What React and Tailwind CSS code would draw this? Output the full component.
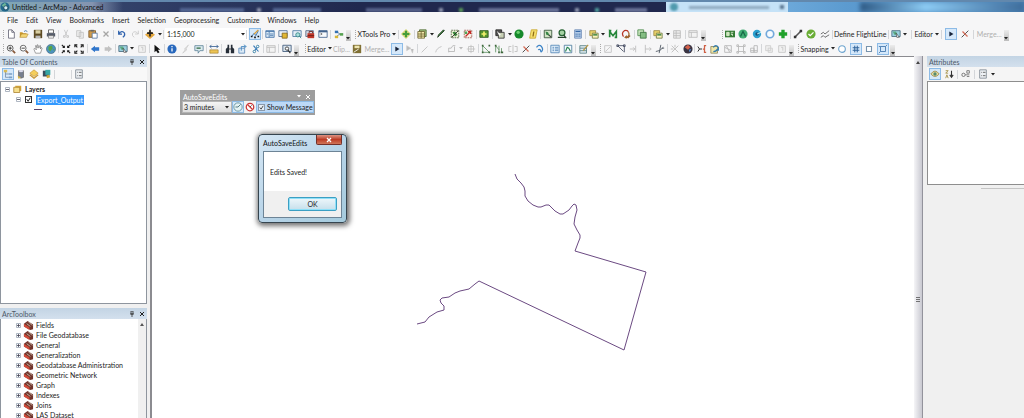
import clsx from "clsx";

const icons = {
  new: <path d="M3 1h4l3 3v7H3z M7 1v3h3" fill="#fff" stroke="#667" />,
  open: (
    <>
      <path d="M1 10V4h3l1 1h4v5z" fill="#c9972b" />
      <path d="M1 10l2-4h8l-2 4z" fill="#f4d675" stroke="#a8832f" strokeWidth=".6" />
      <path d="M6 3q2-2 4 0" fill="none" stroke="#386fa8" />
    </>
  ),
  save: (
    <>
      <path d="M1 1h10v10H1z" fill="#5d4b24" />
      <path d="M3 1.500h6v4H3z" fill="#d9cfa3" />
      <path d="M3 8h6v3H3z" fill="#bbb" />
    </>
  ),
  print: (
    <>
      <path d="M3 1h6v4H3z" fill="#fff" stroke="#555" />
      <path d="M1 5h10v4H1z" fill="#555c6a" />
      <path d="M3 8h6v3H3z" fill="#eee" stroke="#666" strokeWidth=".7" />
    </>
  ),
  cut: <path d="M4 1l3 7M8 1L5 8M3 8h2v2H3zM7 8h2v2H7z" fill="none" stroke="#c4c4c4" />,
  copy: <path d="M2 2h5v7H2zM5 4h5v7H5z" fill="#eee" stroke="#c0c0c0" />,
  paste: (
    <>
      <path d="M1 2h8v8H1z" fill="#cf9a4a" stroke="#7d5a2c" />
      <path d="M3 1h4v2H3z" fill="#666" />
      <path d="M5 5h6v6H5z" fill="#fff" stroke="#56749e" />
    </>
  ),
  delete: <path d="M3 3l6 6M9 3L3 9" stroke="#a5a5a5" strokeWidth="1.500" />,
  undo: <path d="M2 2v4h4M2 6q4-5 7-1q1 3-2 5" fill="none" stroke="#2f62ad" strokeWidth="1.500" />,
  redo: <path d="M10 2v4H6M10 6Q6 1 3 5q-1 3 2 5" fill="none" stroke="#c8c8c8" />,
  add: (
    <>
      <path d="M0 7l6-5 6 5-6 5z" fill="#e3a63c" />
      <path d="M6 1v8M2.500 5h7" stroke="#222" strokeWidth="2" />
    </>
  ),
  editorBar: (
    <>
      <path d="M2 9l3-4 2 3 3-6" fill="none" stroke="#3167a0" />
      <path d="M1 8h2v2H1zM9 8h2v2H9zM5 9h2v2H5z" fill="#111" />
      <path d="M10 1L5 6" stroke="#d99e35" strokeWidth="1.500" />
    </>
  ),
  toc: (
    <>
      <path d="M1 2h10v8H1z" fill="#dcebf7" stroke="#4373a8" />
      <path d="M1 3h10M5 3v7M6 6h4M2 6h2M6 8h4" stroke="#4373a8" />
    </>
  ),
  catalog: (
    <>
      <path d="M1 2h10v7H1z" fill="#e9f1f8" stroke="#4d6c94" />
      <path d="M5 5h6v6H5z" fill="#e1b733" stroke="#85681d" />
    </>
  ),
  search: (
    <>
      <path d="M1 2h10v7H1z" fill="#e4eef7" stroke="#4d79a4" />
      <circle cx="7" cy="7" r="2.500" fill="#a9dfdc" stroke="#338385" />
      <path d="M9 9l2 2" stroke="#338385" />
    </>
  ),
  toolboxWin: (
    <>
      <path d="M1 2h9v7H1z" fill="#d3dbe7" stroke="#54657f" />
      <path d="M3 5h8v6H3z" fill="#c2392b" />
      <path d="M5 5V3h4v2M3 8h8" fill="none" stroke="#681c17" />
    </>
  ),
  python: (
    <>
      <path d="M1 2h10v8H1z" fill="#f7fafd" stroke="#41628d" />
      <path d="M1 3h10" stroke="#41628d" strokeWidth="2" />
      <path d="M3 5l2 1-2 1" fill="none" stroke="#333" strokeWidth=".8" />
    </>
  ),
  model: (
    <>
      <path d="M3 3l4 3-4 3M7 6h4" fill="none" stroke="#5b7895" />
      <path d="M1 2h4v3H1z" fill="#3471b2" />
      <path d="M1 8h4v3H1z" fill="#d7b735" />
      <path d="M7 5h4v3H7z" fill="#55a24e" />
    </>
  ),
  plus: (
    <>
      <path d="M6 0l6 6-6 6-6-6z" fill="#d3d678" />
      <path d="M6 2v8M2 6h8" stroke="#449d3b" strokeWidth="2.500" />
    </>
  ),
  tableX: (
    <>
      <path d="M3 1h8v8H3z" fill="#a2bf7b" stroke="#4c6b31" />
      <path d="M1 3h8v8H1zM1 6h8M1 8.500h8M5 3v8" fill="#f3e8a9" stroke="#625a28" strokeWidth=".9" />
    </>
  ),
  pencilG: <path d="M2 10l1-3 6-6 1 1-6 6z" fill="#3f8b42" stroke="#20331f" />,
  clipG: (
    <>
      <path d="M1.500 1.500h9v9h-9z" fill="#eef2d8" stroke="#4a5b37" strokeDasharray="2 1" />
      <path d="M3 4l3-1 3 4-3 2z" fill="#38883a" />
      <path d="M2 10l8-8" stroke="#222" />
    </>
  ),
  clipR: (
    <>
      <path d="M1.500 1.500h9v9h-9z" fill="#f7efe6" stroke="#9b5148" strokeDasharray="2 1" />
      <path d="M3 9l6-6M6 3h3v3" fill="none" stroke="#c72a27" strokeWidth="1.500" />
      <path d="M2 3h3v3H2z" fill="#54a457" />
    </>
  ),
  plusBox: (
    <>
      <path d="M1 2h10v8H1z" fill="#56942f" stroke="#2c541c" />
      <path d="M6 3v6M3 6h6" stroke="#f2f06e" strokeWidth="2" />
    </>
  ),
  selectX: (
    <>
      <path d="M1 1h7v7H1z" fill="#555" stroke="#222" />
      <path d="M4 4h7v7H4z" fill="#c8d0b5" stroke="#333" />
      <path d="M2 2l5 5-2 1z" fill="#fff" />
    </>
  ),
  ballG: (
    <>
      <circle cx="6" cy="6" r="5.500" fill="#168a2c" />
      <circle cx="5" cy="4" r="2" fill="#6bd06f" />
    </>
  ),
  noteY: (
    <>
      <path d="M4 1h7l-2 10H2z" fill="#f6df6b" stroke="#c6a52d" />
      <path d="M7 3L6 9" stroke="#8b6914" strokeWidth="1.500" />
    </>
  ),
  mapG: (
    <>
      <path d="M1.500 1.500h9v9h-9z" fill="#d2e4c6" stroke="#334f35" />
      <path d="M3 3l3 1 2 4-4-1z" fill="#378445" />
      <path d="M7 7l3 3" stroke="#444" strokeWidth="1.500" />
    </>
  ),
  zoomG: (
    <>
      <circle cx="6" cy="4.500" r="3.500" fill="#a5d1a3" stroke="#276332" strokeWidth="1.500" />
      <path d="M1 10h10M8 7l3 4" stroke="#27462a" strokeWidth="1.500" />
    </>
  ),
  calc: (
    <>
      <path d="M2 1h8v10H2z" fill="#c2d6ef" stroke="#6484b1" />
      <path d="M3 3h6" stroke="#3769a7" strokeWidth="1.500" />
      <path d="M3 6h6M3 8.500h6" stroke="#4675ad" strokeDasharray="1.500 .7" strokeWidth="1.500" />
    </>
  ),
  layersY: (
    <>
      <path d="M1 2h7v6H1z" fill="#ead36b" stroke="#9c8740" />
      <path d="M4 5h7v6H4z" fill="#fcf3bb" stroke="#6e7940" />
      <path d="M5 7h5" stroke="#52914d" strokeWidth="2" />
    </>
  ),
  letterM: <path d="M2 10V3l4 5 4-5v7M1 2h3M8 10h3" fill="none" stroke="#25863a" strokeWidth="2" />,
  rotate: (
    <>
      <path d="M3 9Q0 5 4 2q4-1 5 2" fill="none" stroke="#b73426" strokeWidth="1.500" />
      <path d="M9 4q2 4-2 6H5M7 8l-2 2 2 1M8 11l3-3" fill="none" stroke="#9e612c" strokeWidth="1.500" />
    </>
  ),
  layersG: (
    <>
      <path d="M1 1h7v7H1z" fill="#c9e6bf" stroke="#4e8b4e" />
      <path d="M4 4h7v7H4z" fill="#84be83" stroke="#3a713d" />
    </>
  ),
  grayTable: <path d="M2 2h8v9H2zM2 5h8M2 8h8M5 2v9" fill="#eee" stroke="#b9b9b9" />,
  greenTag: (
    <>
      <path d="M0 2h12v8H0z" fill="#357b35" />
      <path d="M2 4h3v4H2zM7 4h3M7 6h2v2" fill="#cce9b6" stroke="#dcebd1" />
    </>
  ),
  circleA: (
    <>
      <circle cx="6" cy="6" r="5.500" fill="#42ae74" />
      <path d="M3 9l3-6 3 6" fill="none" stroke="#176846" strokeWidth="1.500" />
    </>
  ),
  circleB: (
    <>
      <circle cx="6" cy="6" r="5" fill="#2ca0ce" />
      <circle cx="6" cy="6" r="2" fill="#124e77" />
      <path d="M6 6l5-2" stroke="#dff" />
    </>
  ),
  ring: <circle cx="6" cy="6" r="4.500" fill="#f8fcff" stroke="#72a9dc" strokeWidth="2" />,
  bigPlus: <path d="M6 1v10M1 6h10" stroke="#20a12b" strokeWidth="4" />,
  node: (
    <>
      <path d="M3 9l6-6" stroke="#555" strokeWidth="2" />
      <path d="M1 8h3v3H1zM8 1h3v3H8z" fill="#333" />
    </>
  ),
  check: (
    <>
      <circle cx="6" cy="6" r="5.500" fill="#69ad35" />
      <path d="M3 6l2 2 4-4" fill="none" stroke="#fff" strokeWidth="1.500" />
    </>
  ),
  lines: <path d="M1 6l3-2 2 2 5-4M1 10l3-2 2 2 5-3" fill="none" stroke="#555" />,
  mapSel: (
    <>
      <path d="M1 2h10v7H1z" fill="#9bd0df" stroke="#486b80" />
      <path d="M2 3h4l2 4H4z" fill="#5caa83" />
      <path d="M6 5l4 5H7z" fill="#fff" stroke="#333" strokeWidth=".7" />
    </>
  ),
  play: <path d="M4 3l5 3-5 3z" fill="#18243b" />,
  cutRed: (
    <>
      <path d="M2 10l8-8" stroke="#333" />
      <path d="M3 3l6 6" stroke="#d56d58" strokeWidth="1.500" />
    </>
  ),
  zoomIn: (
    <>
      <circle cx="5" cy="5" r="3.500" fill="#fff" stroke="#444" />
      <path d="M3 5h4M5 3v4" stroke="#222" />
      <path d="M8 8l3 3" stroke="#865839" strokeWidth="2" />
    </>
  ),
  zoomOut: (
    <>
      <circle cx="5" cy="5" r="3.500" fill="#fff" stroke="#555" />
      <path d="M3 5h4" stroke="#222" />
      <path d="M8 8l3 3" stroke="#865839" strokeWidth="2" />
    </>
  ),
  hand: <path d="M3 11L1 6l1-1 2 2-1-5h1l1 3V1h1l1 4 1-3h1v4l1-2 1 1-2 6z" fill="#fff" stroke="#666" strokeWidth=".7" />,
  globe: (
    <>
      <circle cx="6" cy="6" r="5.500" fill="#4a94be" stroke="#47647a" strokeWidth=".7" />
      <path d="M3 3l4-1 1 3-3 4-2-2zM8 7l2-1v2z" fill="#59a545" />
    </>
  ),
  zoomFixIn: <path d="M1 1l3 3M4 2v2H2M11 1L8 4M8 2v2h2M1 11l3-3M2 8h2v2M11 11L8 8M10 8H8v2" fill="none" stroke="#1c1c1c" strokeWidth="1.300" />,
  zoomFixOut: <path d="M4 4L2 2M4 1H1v3M8 4l2-2M8 1h3v3M4 8l-2 2M1 8v3h3M8 8l2 2M11 8v3H8" fill="none" stroke="#1c1c1c" strokeWidth="1.300" />,
  back: <path d="M1 6l5-4v2h5v4H6v2z" fill="#3076cb" />,
  forward: <path d="M11 6L6 2v2H2v4h4v2z" fill="#c2c2c2" />,
  grayBox: <path d="M2 2h8v8H2zM5 4h2v4" fill="#f1f1f1" stroke="#c4c4c4" />,
  pointer: <path d="M3 1v9l2-2 2 3 2-1-2-3h3z" fill="#111" />,
  info: (
    <>
      <circle cx="6" cy="6" r="5.500" fill="#2868bd" />
      <path d="M6 5v4M6 2.500v1.500" stroke="#fff" strokeWidth="1.500" />
    </>
  ),
  bolt: <path d="M9 1L4 6l1 1-3 4 5-4-1-1z" fill="#ddd" stroke="#c2c2c2" strokeWidth=".6" />,
  popup: (
    <>
      <path d="M1 2h10v6H7l-2 3V8H1z" fill="#dcebf0" stroke="#62859b" />
      <path d="M3 5h5" stroke="#57876a" strokeWidth="2" />
    </>
  ),
  measure: (
    <>
      <path d="M1 7h10v4H1z" fill="#edc454" stroke="#987329" strokeWidth=".7" />
      <path d="M1 3h10M3 1L1 3l2 2M9 1l2 2-2 2" fill="none" stroke="#365f91" />
    </>
  ),
  binoculars: (
    <>
      <path d="M3 1h2v4H3zM7 1h2v4H7zM1 6l2-2h2v7H1zM7 4h2l2 2v5H7z" fill="#262e38" />
      <path d="M5 5h2v2H5z" fill="#555" />
    </>
  ),
  route: (
    <>
      <path d="M1 5h7v6H1z" fill="#dceaf6" stroke="#5a88b7" />
      <path d="M4 8V3h5M7 1l3 2-3 2" fill="none" stroke="#3d83bd" />
    </>
  ),
  xy: (
    <>
      <path d="M3 2l6 7M9 2L3 10" stroke="#3177b7" strokeWidth="1.300" />
      <circle cx="8" cy="3" r="1.500" fill="#fff" stroke="#2c789f" />
      <circle cx="4" cy="9" r="1.500" fill="#fff" stroke="#2c789f" />
    </>
  ),
  grayWin: <path d="M1 2h10v8H1zM1 4h10M4 4v6" fill="#f3f3f3" stroke="#bcbcbc" />,
  viewer: (
    <>
      <path d="M1 1.500h10V9H1z" fill="#dae5ef" stroke="#3e5979" />
      <circle cx="6" cy="5.500" r="2" fill="#fff" stroke="#333" />
      <path d="M7 7l3 4" stroke="#333" strokeWidth="1.300" />
    </>
  ),
  mergeDisk: (
    <>
      <path d="M1 1h10v10H1z" fill="#807034" />
      <path d="M3 2h6v3H3z" fill="#efe6b1" />
      <path d="M2 10l6-4" stroke="#fff" />
    </>
  ),
  pointerA: <path d="M2 2v6l5-3zM7 6l2 5 1-5" fill="#bbb" stroke="#c7c7c7" strokeWidth=".7" />,
  line: <path d="M2 10l7-7" stroke="#bdbdbd" />,
  arc: <path d="M2 10q1-5 7-7" fill="none" stroke="#bdbdbd" />,
  polyG: <path d="M2 10V5h3l2-3h3M2 9h7V3" fill="none" stroke="#b5b5b5" />,
  gridG: <path d="M6 1v10M1 6h10M3 3h6v6H3z" fill="none" stroke="#c0c0c0" />,
  vertices: (
    <>
      <path d="M2 2v8h8L2 2" fill="none" stroke="#5f9361" />
      <path d="M1 1h2v2H1zM1 9h2v2H1zM9 9h2v2H9zM9 1h2v2H9z" fill="#3c663b" />
    </>
  ),
  reshape: (
    <>
      <path d="M2 2v8M6 2v8M2 2l4 5M9 5v5" fill="none" stroke="#5f9361" />
      <path d="M1 1h2v2H1zM5 9h2v2H5zM8 9h3v2H8z" fill="#3c663b" />
    </>
  ),
  splitG: <path d="M6 1v10M4 3H1v6h3M8 3h3v6H8" fill="none" stroke="#bdbdbd" />,
  rotateB: <path d="M3 4q3-4 6-1 3 4-1 7M5 7q3-2 3 2" fill="none" stroke="#3d83c6" strokeWidth="1.500" />,
  attrs: (
    <>
      <path d="M1 1.500h10v9H1z" fill="#e2effa" stroke="#4f83b6" />
      <path d="M3 4h2M6 4h4M3 6h2M6 6h4M3 8h2M6 8h4" stroke="#4f83b6" />
    </>
  ),
  sketch: (
    <>
      <path d="M1.500 1.500h9v9h-9z" fill="#f5fbff" stroke="#4c7b9b" />
      <path d="M3 9l2-5 2 1 2 4" fill="none" stroke="#26824c" strokeWidth="1.300" />
    </>
  ),
  createF: (
    <>
      <path d="M1 2h8v9H1zM1 5h8M1 8h8" fill="#dfebf1" stroke="#577f84" />
      <path d="M5 8l6-7" stroke="#b59645" strokeWidth="1.500" />
    </>
  ),
  boxLine: <path d="M2 2h8v8H2zM3 9l6-6" fill="none" stroke="#c2c2c2" />,
  topo: <path d="M2 2h8v8M2 2l7 7M1 1h2v2H1zM9 1h2v2H9z" fill="none" stroke="#434a60" />,
  trim: <path d="M1 6h6M8 2v8M5 4l2 2-2 2" fill="none" stroke="#bcbcbc" />,
  extend: <path d="M4 1v10M4 6h7M9 4l2 2-2 2" fill="none" stroke="#bcbcbc" />,
  cross: <path d="M1 9q5 0 9-5M7 1L5 11M8 5h3" fill="none" stroke="#48525d" />,
  scissors: <path d="M2 2l8 8M10 2l-8 8M6 1v3M1 6h3" stroke="#b8b8b8" />,
  ballR: (
    <>
      <circle cx="6" cy="6" r="5.500" fill="#3a3442" />
      <path d="M2 4l4-3 3 3-3 3z" fill="#d3604a" />
      <path d="M7 7l3-1-2 4z" fill="#5c8ed1" />
    </>
  ),
  redJoin: (
    <>
      <path d="M11 2H9v8h2M9 6H7" fill="none" stroke="#cf6045" strokeWidth="1.500" />
      <path d="M1 3l2 3-2 3M3 6h3" fill="none" stroke="#333" strokeWidth="1.200" />
    </>
  ),
  refresh: (
    <>
      <path d="M1 3h8v8H1z" fill="#efe7a9" stroke="#91885a" />
      <path d="M4 4q3-4 6 0v4M4 9q4 0 5-3" fill="none" stroke="#317cae" strokeWidth="1.500" />
    </>
  ),
  grayA: <path d="M2 2h8v8H2zM2 4l8 4M4 2l4 8" fill="none" stroke="#b5b5b5" />,
  grayB: <path d="M3 3h6v6H3zM1 1h2v2H1zM9 1h2v2H9zM1 9h2v2H1zM9 9h2v2H9z" fill="none" stroke="#b5b5b5" />,
  grayC: <path d="M2 5h4v5H2zM6 2h4v8H6zM2 8h8" fill="none" stroke="#b5b5b5" />,
  grayD: <path d="M2 2h6v6H2zM5 5h5v5H5z" fill="#eee" stroke="#ccc" />,
  snapPoint: <circle cx="6" cy="6" r="4" fill="#fff" stroke="#6da4cf" strokeWidth="1.300" />,
  snapEnd: <path d="M2 4.500h8M2 7.500h8M4.500 2v8M7.500 2v8" fill="none" stroke="#2f639b" strokeWidth="1.200" />,
  snapVertex: <path d="M3 3h6v6H3z" fill="#fff" stroke="#7793ad" strokeWidth="1.300" />,
  snapEdge: <path d="M3 3h6v6H3zM1 11l2-2M9 3l2-2M1 3h2" fill="none" stroke="#3f73ab" />,
  byOrder: (
    <>
      <path d="M3 2v8h4M3 6h4" fill="none" stroke="#7a8fa5" />
      <path d="M1 1h4v3H1z" fill="#d8bb55" />
      <path d="M7 5h4v2H7zM7 9h4v2H7z" fill="#7c9ec4" />
    </>
  ),
  bySource: (
    <>
      <path d="M3 2h6v8l-3 1-3-1z" fill="#777f8f" stroke="#555" strokeWidth=".7" />
      <ellipse cx="6" cy="2.500" rx="3" ry="1.300" fill="#dde" />
      <path d="M2 8l4 2-3 2z" fill="#d8b94b" />
    </>
  ),
  byVisible: (
    <>
      <path d="M1 5l5-4 5 4-5 4z" fill="#f4ce5c" stroke="#bd8e2c" strokeWidth=".7" />
      <path d="M1 7l5 4 5-4" fill="none" stroke="#c59431" strokeWidth="1.500" />
    </>
  ),
  bySelect: (
    <>
      <path d="M1 2h8v7H1z" fill="#394c5c" />
      <path d="M4 1h6v6H4z" fill="#35a6a3" />
      <path d="M5 8l3-1 2 3-4 1z" fill="#cda63b" />
    </>
  ),
  options: (
    <>
      <path d="M2 1h8v10H2z" fill="#eef1f4" stroke="#7e8893" />
      <path d="M4 4h1M6 4h3M4 8h1M6 8h3" stroke="#555" />
    </>
  ),
  eye: (
    <>
      <path d="M1 6q5-7 10 0-5 6-10 0z" fill="#e5d9a2" stroke="#a18d4a" />
      <circle cx="6" cy="6" r="2" fill="#558b6f" />
    </>
  ),
  sort: (
    <>
      <path d="M2 2h3L2 5h3M2 11l1.500-4L5 11" fill="none" stroke="#a08a3c" />
      <path d="M9 2v7M7 7l2 3 2-3" fill="none" stroke="#333" strokeWidth="1.300" />
    </>
  ),
  related: (
    <>
      <circle cx="3" cy="7" r="2" fill="none" stroke="#666" />
      <path d="M5 7h5M7 2h3v3H7zM7 9h3" fill="none" stroke="#6d6d6d" />
    </>
  ),
  clock: (
    <>
      <circle cx="6" cy="6" r="5" fill="#e3f2f4" stroke="#5c8b96" />
      <path d="M6 6l3-3M6 6H3" stroke="#37646f" />
    </>
  ),
  stop: (
    <>
      <circle cx="6" cy="6" r="4.500" fill="#fff" stroke="#cc3737" strokeWidth="1.500" />
      <path d="M3 3l6 6" stroke="#cc3737" strokeWidth="1.500" />
      <path d="M6 6l2-2" stroke="#444" />
    </>
  ),
  layers: (
    <>
      <path d="M3 1h8v7H3z" fill="#d9a93a" />
      <path d="M1 3h8v7H1z" fill="#f6df8d" stroke="#a77c27" />
    </>
  ),
  toolbox: (
    <>
      <path d="M1 4l4-3 6 4v5l-3 1-7-4z" fill="#71332b" />
      <path d="M1 4l6 4v3L1 7z" fill="#d04d3c" />
      <path d="M4 4l4 3M6 2l4 4" stroke="#c9b9a6" />
    </>
  ),
};

const Icon = ({ name, className = "size-3" }) => (
  <svg viewBox="0 0 12 12" aria-hidden="true" className={clsx("block shrink-0", className)}>
    {icons[name]}
  </svg>
);

const Tools = ({ names, active }) =>
  names.split(" ").map((name) => (
    <button
      key={name}
      type="button"
      aria-label={name}
      className={clsx(
        "flex h-3 w-3 shrink-0 items-center justify-center",
        active && "border border-[#8dbbe6] bg-[#d5e8fa]"
      )}
    >
      <Icon name={name} className="size-[10px]" />
    </button>
  ));

const Sep = () => <span className="h-[9px] w-px shrink-0 bg-[#d4d6d9]" />;

const Grip = () => <span className="h-[9px] w-0 shrink-0 border-l border-dotted border-[#aaa]" />;

const Caret = ({ faded }) => (
  <svg viewBox="0 0 4 3" aria-hidden="true" className="h-[3px] w-1 shrink-0">
    <path d="M0 0h4L2 2.500z" fill={faded ? "#bbb" : "#222"} />
  </svg>
);

const Overflow = () => (
  <button type="button" aria-label="Toolbar options" className="flex h-[11px] w-[5px] shrink-0 items-end justify-center self-end bg-linear-to-b from-[#ececec] to-[#bdbdbd] pb-px">
    <Caret />
  </button>
);

const Label = ({ children, caret, off }) => (
  <button type="button" className={clsx("flex shrink-0 items-center gap-[2px] whitespace-nowrap", off && "text-[#b0b0b0]")}>
    {children}
    {caret && <Caret />}
  </button>
);

const Bar = ({ className, children }) => (
  <div role="toolbar" className={clsx("flex h-full shrink-0 items-center justify-between", className)}>
    {children}
  </div>
);

const PanelTitle = ({ children, controls }) => (
  <div className="flex h-[11px] shrink-0 items-center justify-between bg-linear-to-b from-[#c3d4e4] to-[#d3e0ed] px-[2px] text-[#4c5968]">
    <h2>{children}</h2>
    {controls && (
      <div className="flex items-center gap-1">
        <button type="button" aria-label="Auto hide">
          <svg viewBox="0 0 6 6" className="size-[6px]">
            <path d="M2 0v3h2V0zM1 3h4M3 3v3" fill="none" stroke="#333" strokeWidth=".8" />
          </svg>
        </button>
        <button type="button" aria-label="Close">
          <svg viewBox="0 0 6 6" className="size-[6px]">
            <path d="M1 1l4 4M5 1L1 5" stroke="#222" />
          </svg>
        </button>
      </div>
    )}
  </div>
);

const Expander = ({ open }) => (
  <button type="button" aria-label={open ? "Collapse" : "Expand"} className="shrink-0">
    <svg viewBox="0 0 5 5" className="size-[5px]">
      <path d="M.5.5h4v4h-4z" fill="#fff" stroke="#9aa5b3" strokeWidth=".8" />
      <path d={open ? "M1 2.500h3" : "M1 2.500h3M2.500 1v3"} stroke="#445" strokeWidth=".8" />
    </svg>
  </button>
);

const menus = ["File", "Edit", "View", "Bookmarks", "Insert", "Selection", "Geoprocessing", "Customize", "Windows", "Help"];

const toolboxes = [
  "Fields",
  "File Geodatabase",
  "General",
  "Generalization",
  "Geodatabase Administration",
  "Geometric Network",
  "Graph",
  "Indexes",
  "Joins",
  "LAS Dataset",
];

const TitleBar = () => (
  <header className="relative flex h-3 shrink-0 items-center overflow-hidden border-t-2 border-[#6288ad] bg-[#20284e]">
    <div className="absolute inset-y-0 left-[35%] right-[36%] flex items-end justify-around blur-[1px]">
      <span className="h-1 w-14 bg-[#56618a]" />
      <span className="size-1 bg-[#9098b0]" />
      <span className="size-1 bg-[#5a9a58]" />
      <span className="h-1 w-20 bg-[#6a7398]" />
      <span className="size-1 bg-[#9098b0]" />
      <span className="size-1 bg-[#4e9c9c]" />
      <span className="h-1 w-8 bg-[#6a7398]" />
    </div>
    <div className="absolute inset-y-0 left-[10%] w-[25%] bg-linear-to-r from-[#34446c] to-[#20284e]" />
    <div className="absolute inset-y-0 left-[17%] right-[68%] flex items-end justify-around blur-[1px]">
      <span className="h-1 w-16 bg-[#536591]" />
      <span className="size-1 bg-[#9098b0]" />
      <span className="h-1 w-12 bg-[#536591]" />
    </div>
    <div className="absolute inset-y-0 right-0 left-[65%] bg-linear-to-r from-[#8dc4ee] via-[#5c9bd0] to-[#4c83b5]" />
    <div className="absolute inset-y-0 right-0 left-[84%] bg-linear-to-r from-[#2f5a85] via-[#8ccaf2] via-40% to-[#3e6c9b] blur-[2px]" />
    <div className="absolute inset-y-0 left-[65%] flex w-[12%] items-center justify-between bg-[#c5e2f7] px-1">
      <span className="size-2 rounded-full bg-[#4f99ad] blur-[1px]" />
      <span className="h-[3px] w-20 bg-[#8fa9bf] blur-[1px]" />
      <span className="size-1 bg-[#597590] blur-[1px]" />
    </div>
    <div className="absolute inset-y-0 left-0 w-[12%] bg-linear-to-r from-[#7fa8b6] via-[#8494b0] via-75% to-transparent" />
    <svg viewBox="0 0 12 12" className="relative size-[10px]">
      <circle cx="6" cy="6" r="5.500" fill="#23698e" />
      <path d="M2 4l4-3 2 3-3 3z" fill="#6db598" />
      <circle cx="7" cy="7" r="2.500" fill="#d7eef5" stroke="#174358" />
    </svg>
    <h1 className="relative ml-[2px] whitespace-nowrap text-[#111]">Untitled - ArcMap - Advanced</h1>
  </header>
);

const Toolbars = () => (
  <div className="shrink-0 overflow-hidden">
    <div className="flex h-[14px] items-center">
      <Bar className="w-[351px] pl-[3px]">
        <Grip />
        <Tools names="new open save print" />
        <Sep />
        <Tools names="cut copy paste delete" />
        <Sep />
        <Tools names="undo redo" />
        <Sep />
        <Tools names="add" />
        <Caret />
        <Sep />
        <select aria-label="Map scale" className="h-3 w-[83px] shrink-0 appearance-none bg-white px-[2px]">
          <option>1:15,000</option>
        </select>
        <span className="-ml-2">
          <Caret />
        </span>
        <Sep />
        <Tools names="editorBar" active />
        <Sep />
        <Tools names="toc catalog search toolboxWin python" />
        <Sep />
        <Tools names="model" />
        <Overflow />
      </Bar>
      <Bar className="w-[355px] pl-1">
        <Grip />
        <Label caret>XTools Pro</Label>
        <Sep />
        <Tools names="plus" />
        <Sep />
        <Tools names="tableX" />
        <Caret />
        <Tools names="pencilG clipG clipR" />
        <Sep />
        <Tools names="plusBox" />
        <Sep />
        <Tools names="selectX" />
        <Caret />
        <Tools names="ballG noteY" />
        <Sep />
        <Tools names="mapG zoomG" />
        <Sep />
        <Tools names="calc" />
        <Sep />
        <Tools names="layersY" />
        <Caret />
        <Tools names="letterM rotate" />
        <Sep />
        <Tools names="layersG" />
        <Sep />
        <Tools names="layersY" />
        <Caret />
        <Tools names="grayTable" />
        <Sep />
        <Tools names="grayWin" />
        <Overflow />
      </Bar>
      <Bar className="ml-4 w-[185px]">
        <Grip />
        <Tools names="greenTag circleA circleB ring bigPlus" />
        <Sep />
        <Tools names="node check lines" />
        <Sep />
        <Label>Define FlightLine</Label>
        <Sep />
        <Tools names="mapSel" />
        <Caret />
      </Bar>
      <Bar className="ml-1 w-[98px]">
        <Sep />
        <Label caret>Editor</Label>
        <Sep />
        <Tools names="play" active />
        <Tools names="cutRed" />
        <Sep />
        <Label off>Merge...</Label>
        <Overflow />
      </Bar>
    </div>
    <div className="flex h-[15px] items-center">
      <Bar className="w-[299px] pl-[3px]">
        <Grip />
        <Tools names="zoomIn zoomOut hand globe" />
        <Sep />
        <Tools names="zoomFixIn zoomFixOut" />
        <Sep />
        <Tools names="back forward" />
        <Sep />
        <Tools names="mapSel" />
        <Caret />
        <Tools names="grayBox" />
        <Sep />
        <Tools names="pointer" />
        <Sep />
        <Tools names="info bolt popup" />
        <Sep />
        <Tools names="measure" />
        <Sep />
        <Tools names="binoculars route xy" />
        <Sep />
        <Tools names="grayWin" />
        <Sep />
        <Tools names="viewer" />
        <Overflow />
      </Bar>
      <Bar className="ml-1 w-[293px] pl-[2px]">
        <Grip />
        <Label caret>Editor</Label>
        <Label off>Clip...</Label>
        <Tools names="mergeDisk" />
        <Label off>Merge...</Label>
        <Tools names="play" active />
        <Tools names="pointerA" />
        <Sep />
        <Tools names="line arc polyG" />
        <Caret faded />
        <Tools names="gridG" />
        <Sep />
        <Tools names="vertices reshape splitG cutRed rotateB" />
        <Sep />
        <Tools names="attrs sketch" />
        <Sep />
        <Tools names="createF" />
        <Overflow />
      </Bar>
      <Bar className="w-[198px] pl-1">
        <Grip />
        <Tools names="boxLine topo trim extend cross" />
        <Sep />
        <Tools names="scissors ballR" />
        <Sep />
        <Tools names="redJoin refresh grayA grayB grayC" />
        <Sep />
        <Tools names="grayD grayBox" />
        <Overflow />
      </Bar>
      <Bar className="w-[101px] pl-1">
        <Grip />
        <Label caret>Snapping</Label>
        <Tools names="snapPoint" />
        <Tools names="snapEnd" active />
        <Tools names="snapVertex" />
        <Tools names="snapEdge" active />
        <Overflow />
      </Bar>
    </div>
  </div>
);

const AutoSaveToolbar = () => (
  <section className="absolute top-[33px] left-[28px] w-[135px] border-2 border-[#9d9d9d] bg-[#f2f2f2]">
    <div className="flex h-[9px] items-center justify-between bg-[#9d9d9d] px-px text-white">
      <h2>AutoSaveEdits</h2>
      <div className="flex items-center gap-1 pr-px">
        <svg viewBox="0 0 4 3" className="h-[3px] w-1">
          <path d="M0 0h4L2 2.500z" fill="#fff" />
        </svg>
        <button type="button" aria-label="Close toolbar">
          <svg viewBox="0 0 6 6" className="size-[6px]">
            <path d="M1 1l4 4M5 1L1 5" stroke="#fff" />
          </svg>
        </button>
      </div>
    </div>
    <div className="flex h-3 items-center">
      <div className="relative flex h-full items-center">
        <select aria-label="Save interval" className="h-full w-[50px] appearance-none border border-[#b5b5b5] bg-linear-to-b from-[#f4f4f4] to-[#dedede] pl-px">
          <option>3 minutes</option>
        </select>
        <span className="pointer-events-none absolute right-[3px]">
          <Caret />
        </span>
      </div>
      <Tools names="clock" active />
      <Tools names="stop" />
      <label className="flex h-full grow items-center gap-[2px] border border-[#8dbbe6] bg-[#bcd9f7] pl-px whitespace-nowrap">
        <input type="checkbox" defaultChecked className="peer sr-only" />
        <svg viewBox="0 0 6 6" className="size-[7px] shrink-0 border border-[#8b9aab] bg-[#e6eef6]">
          <path d="M1 3l1.500 2L5 1" fill="none" stroke="#333" />
        </svg>
        Show Message
      </label>
    </div>
  </section>
);

const SavedDialog = () => (
  <section
    role="dialog"
    aria-labelledby="saved-title"
    className="absolute top-[77px] left-[106px] flex w-[89px] flex-col rounded-[4px] border border-[#36454f] bg-linear-to-br from-[#d5e7f5] via-[#b8d4e8] to-[#a5cbdd] px-1 pb-1 shadow-[1px_1px_5px_2px_rgba(0,0,0,0.55)]"
  >
    <div className="flex h-4 items-center justify-between">
      <h2 id="saved-title" className="text-[#111]">AutoSaveEdits</h2>
      <button type="button" aria-label="Close dialog" className="flex h-[10px] w-[26px] items-center justify-center self-start rounded-b-[2px] border border-t-0 border-[#743029] bg-linear-to-b from-[#dc9383] via-[#bc3b25] to-[#d07559]">
        <svg viewBox="0 0 6 6" className="size-[6px]">
          <path d="M1 1l4 4M5 1L1 5" stroke="#fff" strokeWidth="1.300" />
        </svg>
      </button>
    </div>
    <div className="border border-[#6d8496] bg-[#f0f0f0]">
      <p className="flex h-[39px] items-center bg-white px-[6px]">Edits Saved!</p>
      <div className="flex h-[26px] items-center justify-end px-1">
        <button type="button" className="h-[14px] w-[49px] rounded-[2px] border border-[#3c9fc3] bg-linear-to-b from-[#eef7fb] to-[#c6dfeb] ring-1 ring-[#8fe0f8] ring-inset">
          OK
        </button>
      </div>
    </div>
  </section>
);

const parcel =
  "363,117 365,122 369,126 372,130 373,134 373,139 376,144 381,148 386,150 389,150 394,148 397,148 403,154 408,157 411,157 417,153 420,149 422,147 424,148 425,153 423,160 422,167 425,173 428,178 428,181 426,186 423,194 494,215 472,293 327,224 323,227 317,232 308,234 303,236 297,240 290,241 288,243 289,246 292,249 292,253 285,255 277,260 273,265 265,267";

const App = () => (
  <div className="flex h-screen min-w-0 flex-col overflow-hidden bg-[#f0f0f0] font-[Lato,'Open_Sans',sans-serif] text-[7px] leading-[10px] text-[#1c1c1c]">
    <TitleBar />
    <div className="shrink-0 bg-[#f6f6f7]">
      <nav className="flex h-[15px] items-center gap-2 px-[7px]">
        {menus.map((menu) => (
          <button key={menu} type="button">
            {menu}
          </button>
        ))}
      </nav>
      <Toolbars />
    </div>
    <div className="flex min-h-0 grow">
      <aside className="flex w-[147px] shrink-0 flex-col">
        <PanelTitle controls>Table Of Contents</PanelTitle>
        <div className="flex h-[14px] shrink-0 items-center gap-[1px] bg-[#f8f8f8] px-[2px]">
          <Tools names="byOrder" active />
          <Tools names="bySource byVisible bySelect" />
          <Sep />
          <span className="w-[14px]" />
          <Sep />
          <Tools names="options" />
        </div>
        <div className="h-[223px] shrink-0 border border-[#8e959e] bg-white pt-[2px]">
          <div className="flex h-[10px] items-center gap-[3px] pl-1 font-bold">
            <Expander open />
            <Icon name="layers" className="size-[9px]" />
            Layers
          </div>
          <label className="flex h-[11px] items-center gap-1 pl-[15px]">
            <Expander open />
            <input type="checkbox" defaultChecked className="peer sr-only" />
            <svg viewBox="0 0 7 7" className="size-[7px] border border-[#333] bg-white">
              <path d="M1 3l2 3 3-5" fill="none" stroke="#111" strokeWidth="1.300" />
            </svg>
            <span className="bg-[#3399ff] px-px text-white">Export_Output</span>
          </label>
          <div className="mt-1 ml-[33px] h-px w-2 bg-[#5b476b]" />
        </div>
        <div className="h-1 shrink-0" />
        <PanelTitle controls>ArcToolbox</PanelTitle>
        <div className="flex min-h-0 grow bg-white">
          <ul className="min-w-0 grow overflow-hidden border-l border-[#8e959e] pt-px">
            {toolboxes.map((name) => (
              <li key={name} className="flex h-[10px] items-center gap-[2px] pl-[15px] whitespace-nowrap">
                <Expander />
                <Icon name="toolbox" className="size-[11px]" />
                {name}
              </li>
            ))}
          </ul>
          <div className="flex w-[9px] shrink-0 justify-center border-r border-[#8e959e] bg-[#f0f0f0] pt-1">
            <svg viewBox="0 0 4 3" className="h-[3px] w-1">
              <path d="M0 3h4L2 0z" fill="#555" />
            </svg>
          </div>
        </div>
      </aside>
      <main className="relative ml-[3px] min-w-0 grow overflow-hidden border-t border-l-2 border-[#8b8b90] bg-white">
        <svg className="absolute inset-0 h-full w-full" fill="none">
          <polyline points={parcel} stroke="#6b4a82" strokeLinejoin="round" />
        </svg>
        <AutoSaveToolbar />
        <SavedDialog />
      </main>
      <div className="flex w-[9px] shrink-0 flex-col items-center border-r border-[#93939c] bg-linear-to-r from-[#f5f5f7] to-[#c9c9d1] pt-[5px]">
        <svg viewBox="0 0 4 3" className="h-[3px] w-1">
          <path d="M0 3h4L2 0z" fill="#444" />
        </svg>
        <span className="grow-2" />
        <svg viewBox="0 0 4 5" className="h-[5px] w-1">
          <path d="M0 .5h4M0 2.500h4M0 4.500h4" stroke="#555" strokeWidth=".8" />
        </svg>
        <span className="grow" />
      </div>
      <aside className="ml-1 flex w-[97px] shrink-0 flex-col">
        <PanelTitle>Attributes</PanelTitle>
        <div className="flex h-[14px] shrink-0 items-center gap-[2px] bg-[#f5f5f5] px-[2px]">
          <Tools names="eye" active />
          <Tools names="sort" />
          <Sep />
          <Tools names="related" />
          <Sep />
          <Tools names="options" />
          <Caret />
        </div>
        <div className="h-[104px] shrink-0 border border-r-0 border-[#8e8e8e] bg-white" />
        <div className="mt-[3px] ml-auto h-px w-[43px] bg-[#c5c5c5]" />
      </aside>
    </div>
  </div>
);

export default App;
